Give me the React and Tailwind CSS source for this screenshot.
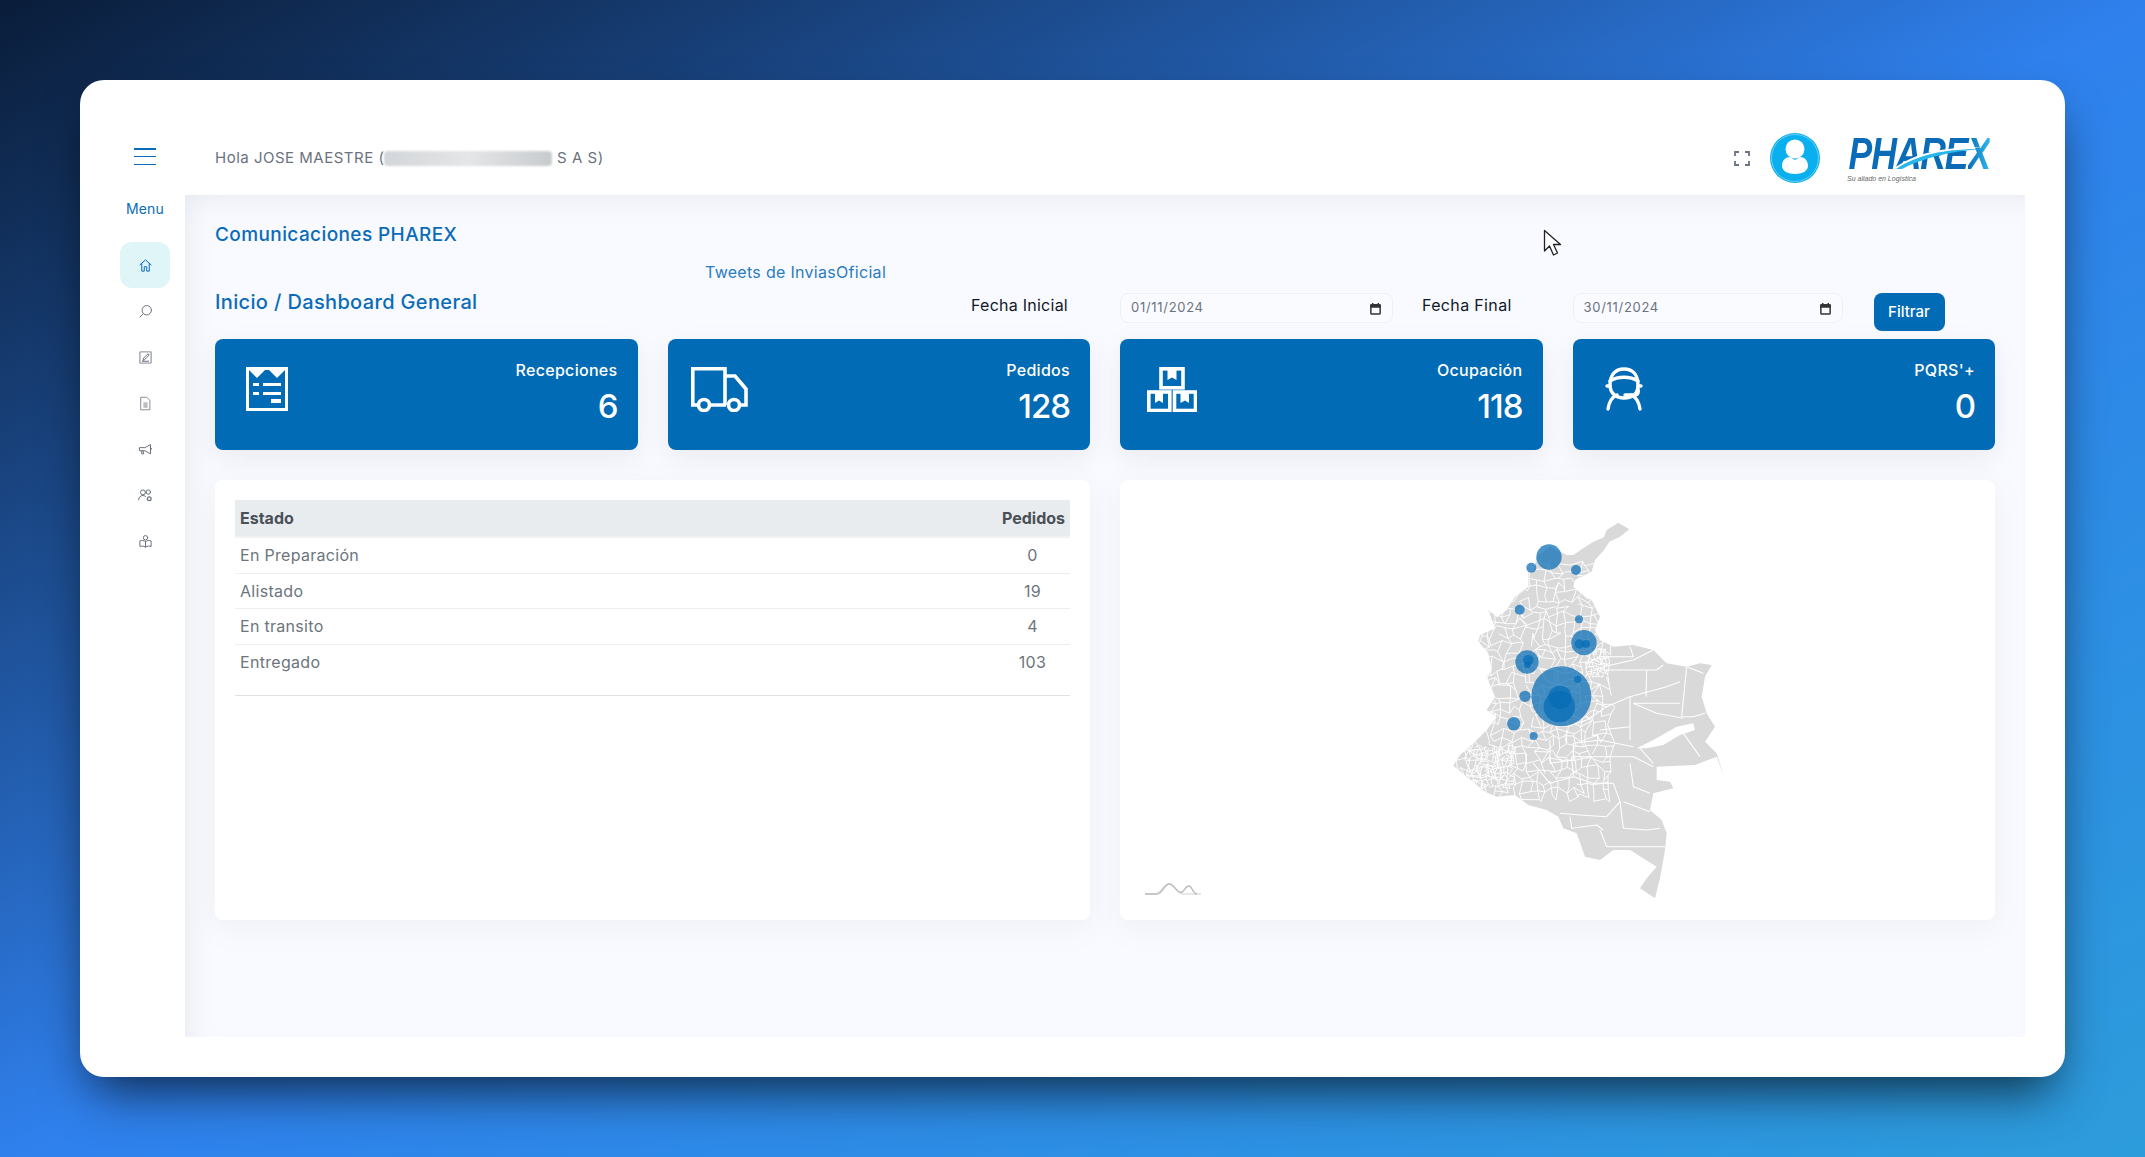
import React from 'react';

const FONT = "font-['Inter','Noto_Sans',sans-serif]";

// seeded noise so the map stays the same on each render
const rand = (i, j, k) => {
  const v = Math.sin(i * 127.1 + j * 311.7 + k * 74.7) * 43758.5453;
  return v - Math.floor(v);
};

const buildNetwork = (x0, x1, y0, y1, cell, keep, seed) => {
  const pts = [];
  const nx = Math.ceil((x1 - x0) / cell);
  const ny = Math.ceil((y1 - y0) / cell);
  for (let i = 0; i <= nx; i++) {
    pts[i] = [];
    for (let j = 0; j <= ny; j++) {
      pts[i][j] = [
        x0 + i * cell + (rand(i, j, seed) - 0.5) * cell * 1.1,
        y0 + j * cell + (rand(i, j, seed + 1) - 0.5) * cell * 1.1,
      ];
    }
  }
  let d = '';
  for (let i = 0; i <= nx; i++) {
    for (let j = 0; j <= ny; j++) {
      const [a, b] = pts[i][j];
      if (i < nx && rand(i, j, seed + 2) < keep) d += `M${a.toFixed(0)} ${b.toFixed(0)}L${pts[i + 1][j][0].toFixed(0)} ${pts[i + 1][j][1].toFixed(0)}`;
      if (j < ny && rand(i, j, seed + 3) < keep) d += `M${a.toFixed(0)} ${b.toFixed(0)}L${pts[i][j + 1][0].toFixed(0)} ${pts[i][j + 1][1].toFixed(0)}`;
    }
  }
  return d;
};

const OUTLINE = 'M655 68L620 90L612 112L580 125L545 148L520 165L500 165L450 140L410 170L400 215L385 215L385 260L345 290L320 330L292 352L265 330L285 385L240 405L235 425L265 460L275 510L260 530L285 590L260 630L290 650L260 690L215 735L180 765L160 797L200 830L255 875L290 890L345 885L385 915L440 930L475 950L490 985L530 1000L555 1070L600 1080L640 1050L690 1050L770 1100L740 1135L720 1165L765 1195L780 1135L795 1050L800 1000L785 960L750 930L760 880L820 865L810 845L770 840L770 800L885 795L950 770L972 830L950 760L915 725L945 680L920 640L905 590L915 530L935 495L900 490L860 500L800 490L760 450L700 435L640 440L600 420L585 390L600 350L575 300L560 295L520 260L525 240L575 215L585 180L612 150L628 125L660 110L688 88Z';

const EAST_LINES = [
  'M615 510L770 510L790 495', 'M740 510L738 590', 'M860 500L845 650', 'M690 590L690 720',
  'M600 690L690 680', 'M400 790L450 850L520 830L580 850L640 850L660 905L620 950L540 945L480 940',
  'M520 830L515 770L700 770L760 800', 'M690 790L700 860L750 880', 'M660 905L670 985L740 990L780 985',
  'M670 905L750 935', 'M600 990L620 1040L690 1040L795 1040', 'M510 950L515 985L590 975L610 990',
  'M450 720L450 790L520 780L520 730L600 720L700 740', 'M500 690L500 730', 'M620 620L690 590L800 560L840 545',
  'M845 650L880 650L915 640', 'M700 610L770 640L850 655', 'M590 610L620 620L560 660L500 680',
  'M610 500L700 480L760 450', 'M600 470L700 470L690 440', 'M860 500L910 520', 'M700 610L840 610',
  'M720 745L760 790', 'M850 700L900 770',
];

const BUBBLES = [
  [447, 171, 38], [394, 203, 15], [528, 210, 15], [359, 329, 15], [537, 358, 12],
  [552, 428, 38], [538, 432, 14], [558, 432, 12], [381, 486, 35], [385, 480, 16],
  [382, 494, 10], [484, 589, 90], [480, 592, 35], [478, 620, 47], [533, 538, 11],
  [375, 589, 17], [341, 671, 20], [401, 708, 12],
];

const ColombiaMap = () => {
  const west = buildNetwork(170, 620, 190, 890, 22, 0.78, 3);
  const dense = buildNetwork(200, 340, 740, 860, 11, 0.75, 9);
  const center = buildNetwork(560, 620, 450, 530, 10, 0.75, 14);
  return (
    <svg viewBox="0 0 1080 1260" className="block w-[360px] h-[420px]">
      <defs>
        <clipPath id="col"><path d={OUTLINE} /></clipPath>
      </defs>
      <path d={OUTLINE} fill="#d9d9d9" />
      <g clipPath="url(#col)" fill="none" stroke="#fff" strokeWidth="2.8" strokeLinejoin="round">
        <path d={west} />
        <path d={dense} />
        <path d={center} />
        {EAST_LINES.map((d) => <path key={d} d={d} strokeWidth="3.200" />)}
      </g>
      <path d="M710 745L760 720L830 680L880 670L885 690L840 705L790 735L740 745Z" fill="#fff" />
      {BUBBLES.map(([cx, cy, r]) => (
        <circle key={`${cx}-${cy}`} cx={cx} cy={cy} r={r} fill="#056cb6" fillOpacity="0.72" />
      ))}
    </svg>
  );
};

const Ico = ({ children, className = 'w-[15px] h-[15px] text-[#6b7280]' }) => (
  <svg viewBox="0 0 24 24" fill="none" stroke="currentColor" strokeWidth="1.6" strokeLinecap="round" strokeLinejoin="round" className={className}>
    {children}
  </svg>
);

const sideIcons = [
  <g key="s"><circle cx="14" cy="10" r="7.500" /><path d="M8.500 15.500L3 21" /></g>,
  <g key="e"><rect x="3" y="3" width="18" height="18" rx="1" strokeWidth="2.2" opacity=".65" /><path d="M8 16l1-3 7-7 2 2-7 7ZM7 18h10" /></g>,
  <g key="f"><path d="M5 2h9l5 5v15H5Z" opacity=".8" /><rect x="8.5" y="10" width="7" height="9" fill="currentColor" stroke="none" opacity=".45" /></g>,
  <g key="m"><path d="M3 9h8l9-5v15l-9-5H3ZM20 9l2 2-2 2M6 14v5h3l-1-5" /></g>,
  <g key="u"><circle cx="8" cy="7" r="4" /><circle cx="16.5" cy="6.5" r="3.5" /><path d="M1 19c0-4 3-7 7-7 1.500 0 3 .5 4 1.500" /><circle cx="18" cy="17" r="3" strokeWidth="2" /></g>,
  <g key="b"><circle cx="12" cy="6" r="3.500" /><path d="M12 12c-3-2-6-2-9-1v9c3-1 6-1 9 1 3-2 6-2 9-1v-9c-3-1-6-1-9 1ZM12 12v9" /></g>,
];

const ReceiptIcon = () => (
  <svg viewBox="0 0 42 44" className="w-[42px] h-[44px]" fill="none">
    <path d="M1.500 1.500h39v41h-39Z" stroke="#fff" strokeWidth="3" />
    <path d="M3 3l8 8 8-8 4 0 8 8 8-8Z" fill="#fff" />
    <path d="M7 16h6v3H7ZM7 25h6v3H7ZM17 16h18v3H17ZM17 25h18v3H17ZM25 32h10v4H25Z" fill="#fff" />
  </svg>
);

const TruckIcon = () => (
  <svg viewBox="0 0 57 45" className="w-[57px] h-[45px]" fill="none" stroke="#fff" strokeWidth="3.600">
    <path d="M7 38H1.800V1.800H34V38M34 9h10l11 13v16h-6M19 38h16" />
    <circle cx="13" cy="38" r="5.500" />
    <circle cx="43" cy="38" r="5.500" />
  </svg>
);

const BoxesIcon = () => (
  <svg viewBox="0 0 50 45" className="w-[50px] h-[45px]" fill="none" stroke="#fff" strokeWidth="3.600">
    <rect x="14" y="1.800" width="22" height="19" />
    <rect x="1.800" y="25" width="21" height="18.500" />
    <rect x="27.500" y="25" width="21" height="18.500" />
    <path d="M20.500 3v10l4.500-2.500 4.500 2.500V3ZM8 26v10l4-2.500 4 2.500V26ZM33.500 26v10l4.500-2.500 4 2.500V26Z" fill="#fff" stroke="none" />
  </svg>
);

const AgentIcon = () => (
  <svg viewBox="0 0 38 44" className="w-[38px] h-[44px]" fill="none" stroke="#fff" strokeWidth="3.400" strokeLinecap="round">
    <path d="M5 18C5 7 11 2 19 2s14 5 14 16c0 8-5 13-14 13-8 0-14-5-14-13Z" />
    <path d="M5 14c8-5 20-5 28 0M2 19h3M33 19h3M20 28h10c3 0 4-3 3-6" />
    <path d="M3 42c1-7 4-12 9-14M35 42c-1-7-4-12-9-14" />
  </svg>
);

const stats = [
  { label: 'Recepciones', value: '6', icon: <ReceiptIcon />, pad: 'pl-[31px]' },
  { label: 'Pedidos', value: '128', icon: <TruckIcon />, pad: 'pl-[23px]' },
  { label: 'Ocupación', value: '118', icon: <BoxesIcon />, pad: 'pl-[27px]' },
  { label: "PQRS'+", value: '0', icon: <AgentIcon />, pad: 'pl-[32px]' },
];

const rows = [
  ['En Preparación', '0'],
  ['Alistado', '19'],
  ['En transito', '4'],
  ['Entregado', '103'],
];

const DateField = ({ value }) => (
  <div className="flex items-center justify-between h-[30px] w-full px-[10px] rounded-lg border border-[#f0f1f4] bg-[#fafbff]">
    <span className="text-[13px] tracking-[0.7px] text-[#6b7280]">{value}</span>
    <svg viewBox="0 0 14 14" className="w-[13px] h-[13px]" fill="none" stroke="#333" strokeWidth="1.600">
      <rect x="2" y="3" width="10" height="10" rx="1" />
      <path d="M2 3.500h10v2H2ZM4 1v2M10 1v2" fill="#333" />
    </svg>
  </div>
);

const Logo = () => (
  <div className="relative w-[146px]">
    <div className="origin-left scale-x-[0.81] pl-[2px] text-[44px] leading-[36px] font-bold italic tracking-[-1.500px] text-[#0a6cb8] font-['Liberation_Sans',sans-serif] whitespace-nowrap">
      PHARE<span className="bg-linear-to-r from-[#0a6cb8] to-[#2fb8ec] bg-clip-text text-transparent">X</span>
    </div>
    <svg viewBox="0 0 146 32" className="absolute left-0 top-[2px] w-[146px] h-[32px]">
      <path d="M46 31C68 15 95 9 136 9 100 12 74 18 52 31Z" fill="#fff" />
      <path d="M49 31C70 17 96 11 134 11 100 14 76 20 55 31Z" fill="#29b6ea" />
    </svg>
    <div className="mt-[2px] text-[7px] leading-[10px] italic text-[#666] font-['Liberation_Sans',sans-serif] whitespace-nowrap">
      Su aliado en Logística
    </div>
  </div>
);

export default function App() {
  return (
    <div className={`${FONT} w-full h-[1157px] overflow-hidden p-[80px] bg-linear-to-br from-[#0a1d3a] via-[#2f80ed] to-[#2d9cdb]`}>
      <div className="relative flex h-[997px] pr-[40px] pb-[40px] rounded-3xl bg-white shadow-[0_25px_50px_-12px_rgba(0,0,0,0.7)]">
        {/* sidebar */}
        <aside className="flex flex-col items-center w-[105px] pl-[25px] shrink-0">
          <div className="flex flex-col justify-between w-[22px] h-[17px] mt-[68px]">
            <span className="block h-[1.500px] bg-[#0a6cb8]" />
            <span className="block h-[1.500px] bg-[#0a6cb8]" />
            <span className="block h-[1.500px] bg-[#0a6cb8]" />
          </div>
          <div className="mt-[34px] text-[14px] leading-[20px] tracking-[0.2px] text-[#0a6cb8]">Menu</div>
          <nav className="flex flex-col mt-[23px]">
            <div className="flex items-center justify-center w-[50px] h-[46px] rounded-xl bg-[#dff5f8]">
              <Ico className="w-[15px] h-[15px] text-[#0a6cb8]">
                <path d="M3 11l9-8 9 8M6 9v12h4v-7h4v7h4V9" />
              </Ico>
            </div>
            {sideIcons.map((icon, i) => (
              <div key={i} className="flex items-center justify-center w-[50px] h-[46px]">
                <Ico>{icon}</Ico>
              </div>
            ))}
          </nav>
        </aside>

        <div className="flex flex-col flex-1 min-w-0">
          {/* top bar */}
          <header className="flex items-center h-[115px] pl-[30px] pr-[30px] shrink-0">
            <div className="relative mt-[41px] text-[15px] leading-[22px] tracking-[0.5px] text-[#6b7280] whitespace-nowrap">
              Hola JOSE MAESTRE (<span className="inline-block w-[168px] h-[15px] align-middle rounded-sm blur-[1px] bg-linear-to-r from-[#d3d6d8] via-[#e4e6e8] to-[#c8cbcd]" /> S A S)
            </div>
            <div className="flex items-center ml-auto mt-[41px]">
              <svg viewBox="0 0 16 15" className="w-[16px] h-[15px]" fill="none" stroke="#6b7280" strokeWidth="1.800">
                <path d="M1 5V1h4M11 1h4v4M15 10v4h-4M5 14H1v-4" />
              </svg>
              <svg viewBox="0 0 50 50" className="w-[50px] h-[50px] ml-[20px]">
                <circle cx="25" cy="25" r="25" fill="#0ab0ee" />
                <circle cx="25" cy="25" r="23.500" fill="none" stroke="#7fd6f6" strokeWidth="0.800" />
                <circle cx="25" cy="16" r="9.500" fill="#fff" />
                <path d="M12 33c0-6 4-9 8-9l5 3 5-3c4 0 8 3 8 9 0 5-6 8-13 8s-13-3-13-8Z" fill="#fff" />
              </svg>
              <div className="ml-[27px] mt-[3px] mr-[2px]"><Logo /></div>
            </div>
          </header>

          {/* main */}
          <main className="flex-1 px-[30px] bg-[#f9faff] shadow-[inset_12px_12px_30px_-12px_rgba(120,130,150,0.16)]">
            <h2 className="mt-[27px] text-[19px] leading-[26px] tracking-[0.4px] font-medium text-[#0a6cb8]">Comunicaciones PHAREX</h2>
            <div className="mt-[12px] ml-[490px] text-[16px] leading-[24px] tracking-[0.3px] text-[#2a7cc0]">Tweets de InviasOficial</div>

            <div className="grid grid-cols-4 gap-x-[30px] mt-[9px] h-[46px]">
              <div className="mt-[-5px] text-[20px] leading-[28px] tracking-[0.35px] font-medium text-[#0a6cb8] whitespace-nowrap">
                Inicio / Dashboard General
              </div>
              <div className="pr-[22px] text-right text-[16px] leading-[24px] tracking-[0.25px] text-[#111827]">Fecha Inicial</div>
              <div className="flex items-start">
                <div className="w-[273px] shrink-0"><DateField value="01/11/2024" /></div>
                <div className="ml-[29px] text-[16px] leading-[24px] tracking-[0.35px] text-[#111827] whitespace-nowrap">Fecha Final</div>
              </div>
              <div className="flex items-start">
                <div className="w-[270px] shrink-0"><DateField value="30/11/2024" /></div>
                <button className="ml-[31px] w-[71px] h-[38px] rounded-lg bg-[#026bb5] text-[15px] font-medium text-white">Filtrar</button>
              </div>
            </div>

            <div className="grid grid-cols-4 gap-x-[30px]">
              {stats.map((s) => (
                <div key={s.label} className={`flex justify-between h-[111px] ${s.pad} pr-[20px] pt-[18px] rounded-lg bg-[#026bb5] text-white shadow-[0_8px_24px_rgba(120,130,150,0.12)]`}>
                  <div className="pt-[10px]">{s.icon}</div>
                  <div className="text-right">
                    <div className="text-[16px] leading-[26px] tracking-[0.3px] font-medium">{s.label}</div>
                    <div className="mt-[1px] text-[33px] leading-[44px] tracking-[-1px] font-medium">{s.value}</div>
                  </div>
                </div>
              ))}
            </div>

            <div className="grid grid-cols-2 gap-x-[30px] mt-[30px]">
              <section className="h-[440px] p-[20px] rounded-lg bg-white shadow-[0_8px_30px_rgba(120,130,150,0.08)]">
                <div className="flex justify-between items-center h-[36px] px-[5px] bg-[#e9ecef] text-[16px] font-bold text-[#495057]">
                  <span>Estado</span>
                  <span>Pedidos</span>
                </div>
                <div className="h-[2px] bg-[#f1f2f4]" />
                {rows.map(([name, count], i) => (
                  <div key={name} className={`flex items-center justify-between h-[35.500px] pl-[5px] text-[16px] tracking-[0.3px] text-[#6c757d] ${i < rows.length - 1 ? 'border-b border-[#eceef0]' : ''}`}>
                    <span>{name}</span>
                    <span className="w-[75px] text-center">{count}</span>
                  </div>
                ))}
                <div className="mt-[15px] border-t border-[#dfe2e5]" />
              </section>

              <section className="relative h-[440px] rounded-lg bg-white shadow-[0_8px_30px_rgba(120,130,150,0.08)]">
                <div className="pl-[280px] pt-[20px]"><ColombiaMap /></div>
                <svg viewBox="0 0 56 14" className="absolute left-[25px] top-[402px] w-[56px] h-[14px]" fill="none" strokeWidth="1.400">
                  <path d="M0 12h10c6 0 8-10 14-10s8 10 14 10h18" stroke="#e0e0e0" />
                  <path d="M0 12h12c6 0 7-10 12-10 6 0 7 10 13 8 3-1 3-6 7-6 3 0 4 8 8 8" stroke="#bdbdbd" />
                </svg>
              </section>
            </div>
          </main>
        </div>

        {/* mouse pointer from the capture */}
        <svg viewBox="0 0 20 27" className="absolute left-[1463px] top-[149px] w-[20px] h-[27px]">
          <path d="M1.500 1.500V22l5-5 4 9 4-2-4-8.500h7Z" fill="#fff" stroke="#222" strokeWidth="1.300" strokeLinejoin="round" />
        </svg>
      </div>
    </div>
  );
}
